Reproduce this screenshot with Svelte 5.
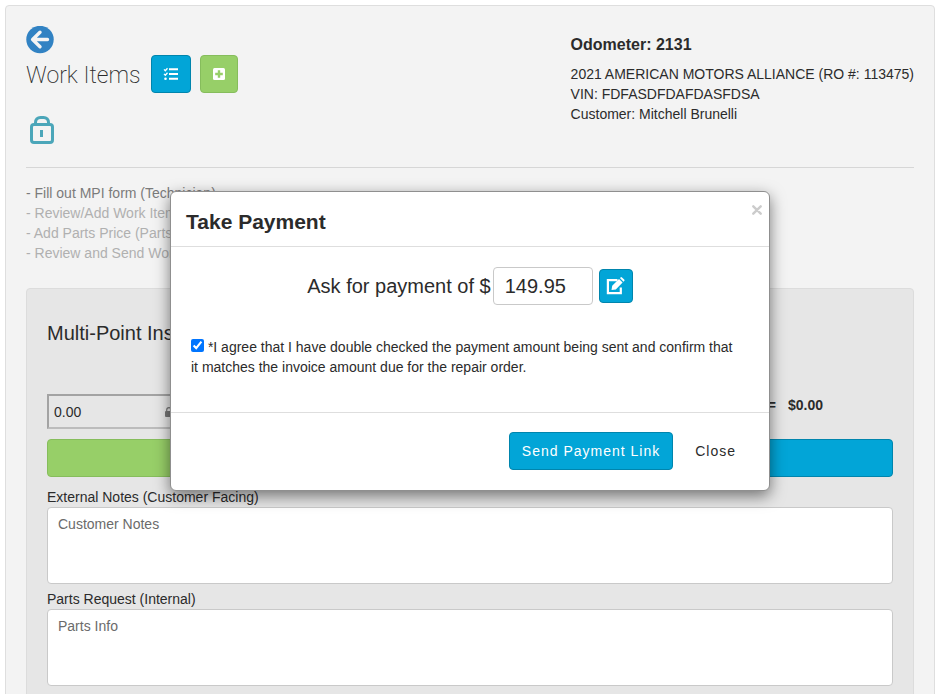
<script>
	let amount = $state("149.95");
	let laborPrice = $state("0.00");
	let agreed = $state(true);
	let showPayment = $state(true);
	let customerNotes = $state("");
	let partsInfo = $state("");

	const steps = [
		{ text: "Fill out MPI form (Technician)", active: true },
		{ text: "Review/Add Work Items", active: false },
		{ text: "Add Parts Price (Parts)", active: false },
		{ text: "Review and Send Work Items", active: false }
	];

	function closePayment() {
		showPayment = false;
	}
</script>

<main class="well">
	<header class="page-header">
		<div class="heading">
			<a href="#back" class="back" aria-label="Back">
				<svg width="28" height="28" viewBox="0 0 28 28">
					<circle cx="14" cy="13.5" r="13.7" fill="#3182c3" />
					<path d="M21.5 13.5H7M14 6.2 6.6 13.5 14 20.8" fill="none" stroke="#f4f4f4" stroke-width="3.4" stroke-linecap="round" stroke-linejoin="round" />
				</svg>
			</a>
			<div class="title-row">
				<h1>Work Items</h1>
				<button class="btn btn-primary btn-list" aria-label="Checklist">
					<svg width="16" height="14" viewBox="0 0 16 14" fill="none" stroke="#fff">
						<path d="M6 2.3H15M6 7H15M6 11.7H15" stroke-width="2" />
						<path d="M1 2.4 2.3 3.7 4.5 1.2M1 6.9 2.3 8.2 4.5 5.7" stroke-width="1.3" />
						<circle cx="2.5" cy="11.7" r="1.3" fill="#fff" stroke="none" />
					</svg>
				</button>
				<button class="btn btn-success btn-add" aria-label="Add work item">
					<svg width="12" height="12" viewBox="0 0 12 12">
						<rect width="12" height="12" rx="1.5" fill="#fff" />
						<path d="M6 2.2V9.8M2.2 6H9.8" stroke="#97cf68" stroke-width="2.4" />
					</svg>
				</button>
			</div>
			<svg class="lock" width="24" height="28" viewBox="0 0 24 28" fill="none" stroke="#4ba6b9" stroke-width="3">
				<rect x="1.5" y="8.5" width="21" height="18" rx="2.5" />
				<path d="M5.5 8V6.5C5.5 3.5 7.5 1.5 10.5 1.5H13.5C16.5 1.5 18.5 3.5 18.5 6.5V8" />
				<path d="M11.5 14V21" />
			</svg>
		</div>
		<div class="vehicle">
			<h2>Odometer: 2131</h2>
			<div>2021 AMERICAN MOTORS ALLIANCE (RO #: 113475)</div>
			<div>VIN: FDFASDFDAFDASFDSA</div>
			<div>Customer: Mitchell Brunelli</div>
		</div>
	</header>

	<div class="steps">
		{#each steps as step}
			<div class:active={step.active}>- {step.text}</div>
		{/each}
	</div>

	<section class="card">
		<h3>Multi-Point Inspection</h3>
		<div class="price-row">
			<div class="price">
				<input type="text" aria-label="Price" readonly bind:value={laborPrice} />
				<svg width="8" height="10" viewBox="0 0 8 10">
					<rect y="4" width="8" height="6" rx="1" fill="#777" />
					<path d="M1.7 4.5V3A2.3 2.3 0 0 1 6.3 3V4.5" fill="none" stroke="#777" stroke-width="1.2" />
				</svg>
			</div>
			<div class="total"><span>=</span><span>$0.00</span></div>
		</div>
		<div class="actions">
			<button class="btn btn-success" aria-label="Approve"></button>
			<button class="btn btn-primary" aria-label="Save"></button>
		</div>
		<label for="customer-notes">External Notes (Customer Facing)</label>
		<textarea id="customer-notes" placeholder="Customer Notes" bind:value={customerNotes}></textarea>
		<label for="parts-info">Parts Request (Internal)</label>
		<textarea id="parts-info" placeholder="Parts Info" bind:value={partsInfo}></textarea>
	</section>
</main>

{#if showPayment}
	<div class="modal" role="dialog" aria-labelledby="payment-title">
		<div class="modal-header">
			<h2 id="payment-title">Take Payment</h2>
			<button class="close" aria-label="Close dialog" onclick={closePayment}>
				<svg width="10" height="10" viewBox="0 0 10 10">
					<path d="M1.3 1.3 8.7 8.7M8.7 1.3 1.3 8.7" stroke="#ccc" stroke-width="2.4" stroke-linecap="round" />
				</svg>
			</button>
		</div>
		<div class="modal-body">
			<div class="amount-row">
				<label for="amount">Ask for payment of $</label>
				<input id="amount" type="text" bind:value={amount} />
				<button class="btn btn-primary btn-edit" aria-label="Edit amount">
					<svg width="20" height="18" viewBox="0 0 20 18">
						<path d="M11.5 3.2H1.9V16.1H14.8V10.5" fill="none" stroke="#fff" stroke-width="2.2" />
						<path d="M5.5 12.9 6.2 8.8 13 2 16.6 5.6 9.8 12.4ZM13.9 1.1 14.6.4Q15.3-.2 16 .4L18.2 2.6Q18.9 3.4 18.2 4.1L17.5 4.8Z" fill="#fff" />
					</svg>
				</button>
			</div>
			<div class="agree">
				<input id="agree" type="checkbox" bind:checked={agreed} />
				<label for="agree">*I agree that I have double checked the payment amount being sent and confirm that it matches the invoice amount due for the repair order.</label>
			</div>
		</div>
		<div class="modal-footer">
			<button class="btn btn-primary btn-text">Send Payment Link</button>
			<button class="btn btn-text" onclick={closePayment}>Close</button>
		</div>
	</div>
{/if}

<style>
	:global(body) {
		height: 100vh;
		overflow: hidden;
		background: #fff;
		color: #2b2b2b;
		font-family: "Liberation Sans", Arial, sans-serif;
		font-size: 14px;
		line-height: 20px;
	}

	:global(*) {
		box-sizing: border-box;
	}

	h1, h2, h3 {
		margin: 0;
	}

	svg {
		display: block;
	}

	.well {
		margin: 5px;
		padding: 20px;
		border: 1px solid #dedede;
		border-radius: 4px;
		background: #f3f3f3;
	}

	.page-header {
		display: flex;
		justify-content: space-between;
		height: 142px;
		border-bottom: 1px solid #d6d6d6;
	}

	.back {
		display: block;
		width: 28px;
	}

	.title-row {
		display: flex;
		align-items: center;
		margin-top: 1px;
	}

	h1 {
		margin-right: 10px;
		padding-top: 4px;
		font-family: Roboto, "Liberation Sans", sans-serif;
		font-size: 23px;
		font-weight: 200;
		line-height: 34px;
	}

	.lock {
		margin: 23px 0 0 4px;
	}

	.vehicle {
		padding-top: 9px;
	}

	.vehicle h2 {
		margin-bottom: 9px;
		font-size: 16px;
		line-height: 20px;
	}

	.btn {
		display: flex;
		align-items: center;
		justify-content: center;
		height: 38px;
		padding: 0;
		border: 1px solid transparent;
		border-radius: 4px;
		background: none;
		color: #2b2b2b;
		font: inherit;
	}

	.btn-primary {
		border-color: #0085ad;
		background: #02a5d7;
		color: #fff;
	}

	.btn-success {
		border-color: #86bd5c;
		background: #97cf68;
	}

	.btn-list {
		width: 40px;
		margin-right: 9px;
	}

	.btn-add {
		width: 38px;
	}

	.steps {
		padding: 15px 0 25px;
		color: #b0b0b0;
	}

	.steps .active {
		color: #7b7b7b;
	}

	.card {
		padding: 20px;
		border: 1px solid #dcdcdc;
		border-radius: 4px;
		background: #e6e6e6;
	}

	h3 {
		margin: 9px 0 46px;
		font-size: 20px;
		font-weight: 400;
		line-height: 30px;
	}

	.price-row {
		display: flex;
		justify-content: space-between;
		padding-right: 70px;
	}

	.price {
		display: flex;
		align-items: center;
		width: 136px;
		height: 35px;
		border: 2px solid #bcbcbc;
		border-top-color: #a3a3a3;
		border-left-color: #a3a3a3;
	}

	.price input {
		width: 116px;
		padding: 0 5px;
		border: 0;
		background: none;
		color: inherit;
		font: inherit;
	}

	.total {
		display: flex;
		gap: 12px;
		font-weight: 700;
		line-height: 22px;
	}

	.actions {
		display: flex;
		margin: 10px 0;
	}

	.actions .btn {
		flex: 1;
	}

	.card label {
		display: block;
	}

	textarea {
		display: block;
		width: 100%;
		height: 77px;
		margin-bottom: 5px;
		padding: 6px 10px;
		border: 1px solid #c9c9c9;
		border-radius: 4px;
		background: #fff;
		font: inherit;
		resize: none;
	}

	textarea::placeholder {
		color: #6b6b6b;
	}

	.modal {
		position: absolute;
		top: 191px;
		left: 0;
		right: 0;
		max-width: 600px;
		margin: 0 auto;
		border: 1px solid #8f8f8f;
		border-radius: 6px;
		background: #fff;
		box-shadow: 0 5px 15px rgba(0, 0, 0, 0.5);
	}

	.modal-header {
		display: flex;
		justify-content: space-between;
		align-items: flex-start;
		padding: 12px 7px 6px 15px;
		border-bottom: 1px solid #dedede;
	}

	.modal-header h2 {
		font-size: 21px;
		line-height: 36px;
	}

	.close {
		padding: 1px 0 0;
		border: 0;
		background: none;
	}

	.modal-body {
		padding: 20px;
	}

	.amount-row {
		display: flex;
		align-items: center;
		justify-content: center;
		font-size: 20px;
	}

	.amount-row input {
		width: 100px;
		height: 38px;
		margin: 0 6px 0 2px;
		padding: 0 11px;
		border: 1px solid #c9c9c9;
		border-radius: 4px;
		color: inherit;
		font: inherit;
	}

	.btn-edit {
		width: 34px;
		height: 34px;
	}

	.agree {
		margin: 32px 0 15px;
		padding-right: 10px;
	}

	.agree input {
		width: 13px;
		height: 13px;
		margin: 0;
		accent-color: #0075ff;
	}

	.modal-footer {
		display: flex;
		justify-content: flex-end;
		gap: 9px;
		padding: 19px 20px 20px;
		border-top: 1px solid #dedede;
	}

	.btn-text {
		padding: 0 12px;
		letter-spacing: 1px;
	}
</style>
